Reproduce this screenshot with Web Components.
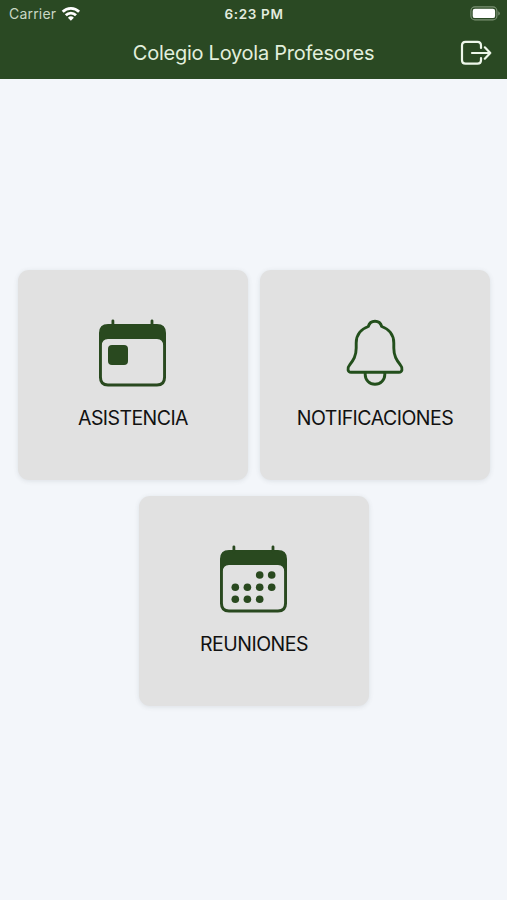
<!DOCTYPE html>
<html lang="es">
<head>
<meta charset="utf-8">
<title>Colegio Loyola Profesores</title>
<style>
  html, body { margin: 0; height: 100%; }
  body { font-family: Inter, "Liberation Sans", sans-serif; background: #f3f6fa; overflow: hidden; }
</style>
</head>
<body>
<school-app>
  <status-bar slot="top" carrier="Carrier" time="6:23 PM"></status-bar>
  <nav-bar slot="top">Colegio Loyola Profesores</nav-bar>
  <menu-card icon="day" style="--track:-0.58px">ASISTENCIA</menu-card>
  <menu-card icon="bell" style="--track:-0.52px">NOTIFICACIONES</menu-card>
  <menu-card icon="month" style="--track:-0.5px">REUNIONES</menu-card>
</school-app>
<script>
const attach = (el, html) => { el.attachShadow({ mode: 'open' }).innerHTML = html; };

customElements.define('school-app', class extends HTMLElement {
  constructor() {
    super();
    attach(this, `<style>
      :host { display: flex; flex-direction: column; height: 100vh; background: #f3f6fa; }
      header { background: #2a4923; height: 79px; display: flex; flex-direction: column; flex: none; }
      main { flex: 1; display: flex; flex-wrap: wrap; justify-content: center; align-content: center;
             gap: 16px 12px; padding: 0 16px 3px 17px; }
    </style><header><slot name="top"></slot></header><main><slot></slot></main>`);
  }
});

customElements.define('status-bar', class extends HTMLElement {
  constructor() {
    super();
    attach(this, `<style>
      :host { display: grid; grid-template-columns: 1fr auto 1fr; align-items: center; height: 27px;
              padding: 0 7px 0 8px; color: #e3ebdf; font-size: 14px; line-height: 27px; }
      .left { display: flex; align-items: center; gap: 5px; color: #c9d8c4; letter-spacing: .2px; padding-left: 1px; }
      .time { font-size: 13.5px; font-weight: 600; letter-spacing: .65px; padding-top: 1px; line-height: 26px; }
      .right { display: flex; justify-content: flex-end; }
      svg { display: block; }
    </style>
    <div class="left"><span>${this.getAttribute('carrier')}</span>
      <svg width="20" height="16" viewBox="0 0 20 16" fill="none" stroke="#fff" stroke-width="2.8">
        <path d="M1.7 5.700a11.6 11.6 0 0 1 16.4 0"/><path d="M4.8 9.2a7.2 7.2 0 0 1 10.2 0"/>
        <path d="M9.9 14.8 6.9 11.7a4.3 4.3 0 0 1 6 0z" fill="#fff" stroke="none"/>
      </svg></div>
    <span class="time">${this.getAttribute('time')}</span>
    <div class="right"><svg width="30" height="15" viewBox="0 0 30 15">
      <rect x=".9" y=".9" width="26" height="13" rx="4" fill="none" stroke="#7c9375" stroke-width="1.1"/>
      <rect x="2.7" y="2.7" width="22.4" height="9.4" rx="2.2" fill="#fff"/>
      <path d="M28.3 5.2q1.5.7 1.5 2.2t-1.5 2.2z" fill="#7c9375"/></svg></div>`);
  }
});

customElements.define('nav-bar', class extends HTMLElement {
  constructor() {
    super();
    attach(this, `<style>
      :host { display: grid; grid-template-columns: 1fr auto 1fr; align-items: center; height: 52px;
              padding: 0 15px; color: #e2efdd; font-size: 20px; line-height: 52px; }
      .title { grid-column: 2; letter-spacing: -.25px; white-space: nowrap; }
      svg { display: block; justify-self: end; }
    </style><span class="title"><slot></slot></span>
    <svg width="32" height="26" viewBox="0 0 32 26" fill="none" stroke="#edf7ea" stroke-width="2.2" stroke-linecap="round" stroke-linejoin="round">
      <path d="M21 8V5.500Q21 1.800 17.500 1.800H5.500Q2 1.800 2 5.500V20.200Q2 23.700 5.500 23.700H17.500Q21 23.700 21 20.200V18"/>
      <path d="M12 13H30.300M24.800 7.300 30.300 13 24.800 18.700"/></svg>`);
  }
});

const calendar = content => `
  <path fill="#29491f" fill-rule="evenodd" d="M10 6H59Q68 6 68 15V59.500Q68 68.500 59 68.500H10Q1 68.500 1 59.500V15Q1 6 10 6ZM10 21Q3.900 21 3.900 27.500V59Q3.900 65.500 10 65.500H59Q65.100 65.500 65.100 59V27.500Q65.100 21 59 21Z"/>
  <path d="M14.900 2.800V8M54 2.800V8" stroke="#29491f" stroke-width="2.800" stroke-linecap="round"/>${content}`;

const icons = {
  day: calendar('<rect x="10" y="27" width="20" height="20" rx="4" fill="#29491f"/>'),
  month: calendar([[40.7, 31], [52.7, 31], [16.3, 43.3], [28.4, 43.3], [40.7, 43.3], [52.7, 43.3], [16.3, 55.3], [28.4, 55.3], [40.7, 55.3]]
    .map(([x, y]) => `<circle cx="${x}" cy="${y}" r="3.8" fill="#29491f"/>`).join('')),
  bell: `<g fill="none" stroke="#234f1c" stroke-width="2.900" stroke-linejoin="round">
    <path d="M35 3.200C31.500 3.200 29.200 5.200 28.300 8.500C21 11 16.200 17 16.200 25V30C16.200 38 13.500 42 9.500 47.200C6.800 50.500 7.900 54.300 11 54.300H59C62.100 54.300 63.200 50.500 60.500 47.200C56.500 42 53.800 38 53.800 30V25C53.800 17 49 11 41.700 8.500C40.800 5.200 38.500 3.200 35 3.200Z"/>
    <path d="M25.200 55V56.500C25.200 62 29.500 66.200 35 66.200S44.800 62 44.800 56.500V55"/></g>`
};

customElements.define('menu-card', class extends HTMLElement {
  constructor() {
    super();
    attach(this, `<style>
      :host { display: flex; flex-direction: column; align-items: center; box-sizing: border-box;
              width: 230px; height: 210px; padding-top: 48px; border-radius: 11px; background: #e1e1e1;
              box-shadow: 0 1px 5px rgba(60, 65, 75, .12); color: #111; }
      svg { display: block; flex: none; }
      .label { margin-top: 14px; font-size: 19.5px; line-height: 32px; letter-spacing: var(--track, 0); white-space: nowrap; }
    </style><svg width="70" height="70" viewBox="0 0 70 70">${icons[this.getAttribute('icon')]}</svg>
    <span class="label"><slot></slot></span>`);
  }
});
</script>
</body>
</html>
